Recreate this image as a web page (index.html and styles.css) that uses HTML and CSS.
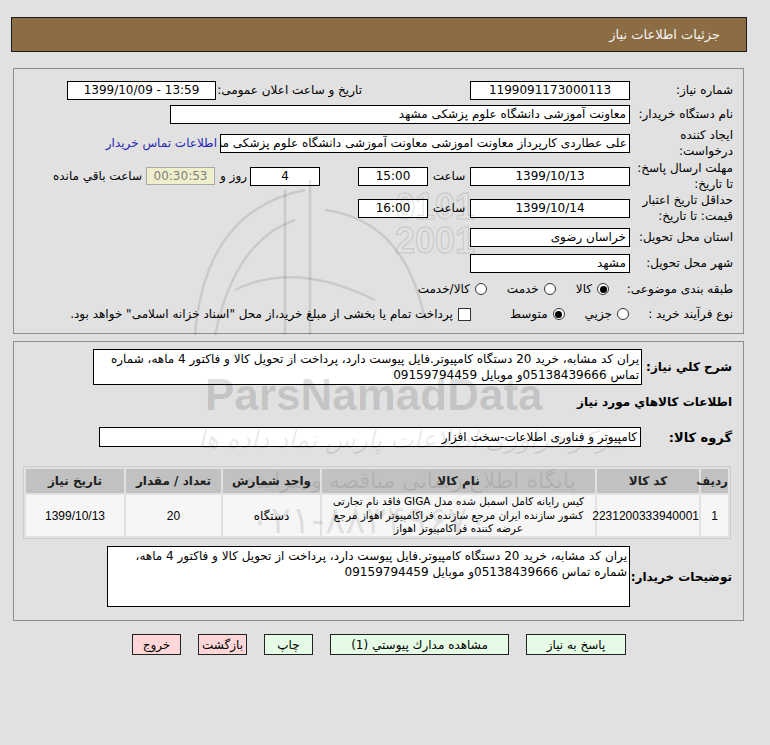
FILE: index.html
```html
<!DOCTYPE html>
<html lang="fa" dir="rtl">
<head>
<meta charset="utf-8">
<title>جزئیات اطلاعات نیاز</title>
<link rel="stylesheet" href="styles.css">
</head>
<body>
<div class="page">
  <div class="title-bar">جزئیات اطلاعات نیاز</div>

  <div class="panel form-panel">
    <div class="row r1">
      <div class="lbl">شماره نیاز:</div>
      <div class="box w160 c">1199091173000113</div>
      <div class="ann-lbl">تاریخ و ساعت اعلان عمومی:</div>
      <div class="box ann c" dir="ltr">1399/10/09 - 13:59</div>
    </div>
    <div class="row r2">
      <div class="lbl">نام دستگاه خریدار:</div>
      <div class="box w460">معاونت آموزشی دانشگاه علوم پزشکی مشهد</div>
    </div>
    <div class="row r3">
      <div class="lbl two">ایجاد کننده<br>درخواست:</div>
      <div class="box w410 clip">علی عطاردی کارپرداز معاونت اموزشی معاونت آموزشی دانشگاه علوم پزشکی مشهد</div>
      <a class="contact" href="#">اطلاعات تماس خریدار</a>
    </div>
    <div class="row r4">
      <div class="lbl two">مهلت ارسال پاسخ:<br>تا تاریخ:</div>
      <div class="box w160 c">1399/10/13</div>
      <div class="sa">ساعت</div>
      <div class="box w70 c">15:00</div>
      <div class="box w70 c days">4</div>
      <div class="roz">روز و</div>
      <div class="countdown" dir="ltr">00:30:53</div>
      <div class="remain">ساعت باقي مانده</div>
    </div>
    <div class="row r5">
      <div class="lbl two">حداقل تاریخ اعتبار<br>قیمت: تا تاریخ:</div>
      <div class="box w160 c">1399/10/14</div>
      <div class="sa">ساعت</div>
      <div class="box w70 c">16:00</div>
    </div>
    <div class="row r6">
      <div class="lbl">استان محل تحویل:</div>
      <div class="box w160">خراسان رضوی</div>
    </div>
    <div class="row r7">
      <div class="lbl">شهر محل تحویل:</div>
      <div class="box w160">مشهد</div>
    </div>
    <div class="row r8">
      <div class="lbl">طبقه بندی موضوعی:</div>
      <span class="rb on first8"></span><span class="opt">کالا</span>
      <span class="rb"></span><span class="opt">خدمت</span>
      <span class="rb"></span><span class="opt">کالا/خدمت</span>
    </div>
    <div class="row r9">
      <div class="lbl">نوع فرآیند خرید :</div>
      <span class="rb first9"></span><span class="opt">جزيي</span>
      <span class="rb on"></span><span class="opt tight">متوسط</span>
      <span class="cb"></span><span class="opt tight">پرداخت تمام یا بخشی از مبلغ خرید،از محل "اسناد خزانه اسلامی" خواهد بود.</span>
    </div>
  </div>

  <div class="panel items-panel">
    <div class="row sharh">
      <div class="blbl w90">شرح كلي نياز:</div>
      <div class="textbox tb-sharh">یران کد مشابه، خرید 20 دستگاه کامپیوتر.فایل پیوست دارد، پرداخت از تحویل کالا و فاکتور 4 ماهه، شماره<br>تماس 05138439666و موبایل 09159794459</div>
    </div>
    <div class="section-title">اطلاعات كالاهاي مورد نياز</div>
    <div class="row group">
      <div class="blbl big w91">گروه کالا:</div>
      <div class="box w542">کامپیوتر و فناوری اطلاعات-سخت افزار</div>
    </div>
    <table class="items">
      <colgroup>
        <col class="c-radif"><col class="c-code"><col class="c-name"><col class="c-unit"><col class="c-qty"><col class="c-date">
      </colgroup>
      <thead>
        <tr><th>ردیف</th><th>کد کالا</th><th>نام کالا</th><th>واحد شمارش</th><th>تعداد / مقدار</th><th>تاریخ نیاز</th></tr>
      </thead>
      <tbody>
        <tr>
          <td class="num">1</td>
          <td class="num">2231200333940001</td>
          <td class="name">کیس رایانه کامل اسمبل شده مدل GIGA فاقد نام تجارتی<br>کشور سازنده ایران مرجع سازنده فراکامپیوتر اهواز مرجع<br>عرضه کننده فراکامپیوتر اهواز</td>
          <td>دستگاه</td>
          <td class="num">20</td>
          <td class="num">1399/10/13</td>
        </tr>
      </tbody>
    </table>
    <div class="row buyer">
      <div class="blbl w102">توضیحات خریدار:</div>
      <div class="textbox tb-buyer">یران کد مشابه، خرید 20 دستگاه کامپیوتر.فایل پیوست دارد، پرداخت از تحویل کالا و فاکتور 4 ماهه،<br>شماره تماس 05138439666و موبایل 09159794459</div>
    </div>
  </div>

  <div class="buttons">
    <button class="btn green b-reply">پاسخ به نیاز</button>
    <button class="btn green b-docs">مشاهده مدارك پيوستي (1)</button>
    <button class="btn green b-small">چاپ</button>
    <button class="btn pink b-small">بازگشت</button>
    <button class="btn pink b-small">خروج</button>
  </div>
</div>

<div class="watermark" aria-hidden="true">
  <svg class="wm-logo" width="260" height="200" viewBox="0 0 260 200">
    <path d="M20 185 Q30 60 130 40" />
    <path d="M40 185 Q60 90 120 70" />
    <path d="M110 40 L110 185 M135 30 L135 185" />
    <path d="M150 60 Q230 70 250 170" />
    <path d="M60 140 Q120 110 200 150" />
  </svg>
  <div class="wm-digits">0101<br>2001</div>
  <div class="wm-latin">ParsNamadData</div>
  <div class="wm-fa1">مرکز فراوری اطلاعات پارس نماد داده ها</div>
  <div class="wm-fa2">پایگاه اطلاع رسانی مناقصه و مزایده</div>
  <div class="wm-phone">۰۲۱-۸۸۳۴۹۶۷۰</div>
</div>
</body>
</html>
```

FILE: styles.css
```css
* { box-sizing: border-box; }
html, body { margin: 0; padding: 0; }
body {
  background: #e1e1e1;
  font-family: "DejaVu Sans", sans-serif;
  font-size: 12px;
  color: #000;
  position: relative;
  width: 770px;
  height: 745px;
  overflow: hidden;
}
.page {
  direction: rtl;
  margin: 0 23px 0 11px;
  padding-top: 17px;
}
.title-bar {
  height: 35px;
  background: #8c6c42;
  border: 1px solid #1c1c1c;
  color: #f3f3f3;
  font-size: 13px;
  line-height: 33px;
  padding-right: 26px;
}
.panel {
  border: 1px solid #8e8e8e;
  margin: 0 3px 0 2px;
  padding-right: 10px;
}
.form-panel { margin-top: 16px; padding-top: 9px; padding-bottom: 7px; }
.row { display: flex; align-items: center; }
.r1, .r2 { height: 24px; }
.r3 { height: 34px; }
.r4, .r5 { height: 32px; }
.r6, .r7, .r8 { height: 26px; }
.r9 { height: 24px; }
.lbl { width: 103px; flex: none; line-height: 16px; white-space: nowrap; }
.box {
  height: 19px;
  background: #fff;
  border: 1px solid #000;
  line-height: 17px;
  padding: 0 3px;
  white-space: nowrap;
  flex: none;
}
.c { text-align: center; }
.w160 { width: 160px; }
.w460 { width: 460px; }
.w410 { width: 410px; }
.w70 { width: 70px; }
.w542 { width: 542px; }
.clip { overflow: hidden; padding-right: 2px; }
.ann-lbl { width: 144px; margin-right: 108px; white-space: nowrap; }
.ann { width: 149px; margin-right: 2px; }
.contact { color: #2626b4; text-decoration: none; margin-right: 3px; white-space: nowrap; }
.sa { width: 42px; text-align: center; }
.days { margin-right: 38px; }
.roz { width: 35px; padding-right: 3px; }
.countdown {
  width: 69px;
  height: 18px;
  background: #efefcb;
  border: 1px solid #a9a9a9;
  color: #7f7f7f;
  text-align: center;
  line-height: 16px;
}
.remain { margin-right: 4px; white-space: nowrap; }
.rb {
  width: 12px; height: 12px;
  border: 1px solid #333;
  border-radius: 50%;
  background: #fff;
  position: relative;
  flex: none;
}
.rb.on::after {
  content: "";
  position: absolute;
  left: 1.5px; top: 1.5px; right: 1.5px; bottom: 1.5px;
  border-radius: 50%;
  background: #000;
}
.cb { width: 13px; height: 13px; border: 1px solid #333; background: #fff; flex: none; margin-right: 39px; }
.opt { margin-right: 5px; margin-left: 20px; white-space: nowrap; }
.opt.tight { margin-left: 0; }
.first8 { margin-right: 21px; }
.first9 { margin-right: 1px; }

.items-panel { margin-top: 7px; padding-top: 7px; padding-bottom: 13px; padding-right: 11px; }
.blbl { font-weight: bold; flex: none; white-space: nowrap; }
.blbl.big { font-size: 13px; }
.w90 { width: 90px; }
.w91 { width: 91px; }
.w102 { width: 102px; }
.textbox {
  background: #fff;
  border: 1px solid #000;
  line-height: 16px;
  padding: 1px 2px;
  white-space: nowrap;
  overflow: hidden;
}
.tb-sharh { width: 549px; height: 36px; }
.section-title { font-weight: bold; line-height: 16px; margin-top: 9px; }
.group { margin-top: 17px; height: 20px; }
.group .box { height: 20px; line-height: 18px; }
.items {
  margin-top: 19px;
  width: 705px;
  border: 1px solid #cdcdcd;
  border-spacing: 2px;
  table-layout: fixed;
  margin-right: 1px;
}
.c-radif { width: 27px; }
.c-code { width: 102px; }
.c-name { width: 273px; }
.c-unit { width: 97px; }
.c-qty { width: 95px; }
.c-date { width: 98px; }
.items th {
  background: #c1c1c1;
  height: 24px;
  font-weight: bold;
  color: #222;
  padding: 0;
}
.items td {
  background: #f6f6f6;
  height: 41px;
  text-align: center;
  padding: 0;
  line-height: 14px;
}
.items td.num { font-family: "Liberation Sans", "DejaVu Sans", sans-serif; font-size: 12px; }
.items td.name { white-space: nowrap; font-size: 10.5px; line-height: 13.5px; overflow: hidden; }
.buyer { margin-top: 7px; }
.tb-buyer { width: 523px; height: 61px; }

.buttons {
  display: flex;
  gap: 17px;
  margin-top: 13px;
  padding-right: 121px;
}
.btn {
  height: 21px;
  border: 1px solid #222;
  font-family: "DejaVu Sans", sans-serif;
  font-size: 12px;
  color: #000;
  padding: 0;
  direction: rtl;
}
.green { background: #e6fbe6; }
.pink { background: #fdd7d7; }
.b-reply { width: 100px; }
.b-docs { width: 179px; }
.b-small { width: 49px; }

.watermark {
  position: absolute;
  left: 0; top: 0;
  width: 770px; height: 745px;
  pointer-events: none;
  color: rgba(0,0,0,0.13);
}
.wm-logo { position: absolute; left: 175px; top: 150px; }
.wm-logo path { fill: none; stroke: rgba(0,0,0,0.1); stroke-width: 2.5; }
.wm-digits {
  position: absolute; left: 395px; top: 190px;
  font-family: "Liberation Sans", sans-serif; font-weight: bold;
  font-size: 36px; line-height: 34px;
  color: transparent;
  -webkit-text-stroke: 1.5px rgba(0,0,0,0.1);
}
.wm-latin {
  position: absolute; left: 205px; top: 373px;
  font-family: "Liberation Sans", sans-serif; font-weight: bold;
  font-size: 44px; line-height: 44px;
}
.wm-fa1 {
  position: absolute; left: 198px; top: 424px;
  direction: rtl; font-size: 25px; line-height: 32px; font-style: italic;
  color: rgba(0,0,0,0.09); white-space: nowrap;
}
.wm-fa2 {
  position: absolute; left: 245px; top: 466px;
  direction: rtl; font-size: 22px; line-height: 30px;
  color: rgba(0,0,0,0.09); white-space: nowrap;
}
.wm-phone {
  position: absolute; left: 250px; top: 500px;
  font-size: 38px; line-height: 40px;
  color: rgba(0,0,0,0.09); white-space: nowrap;
}
```
